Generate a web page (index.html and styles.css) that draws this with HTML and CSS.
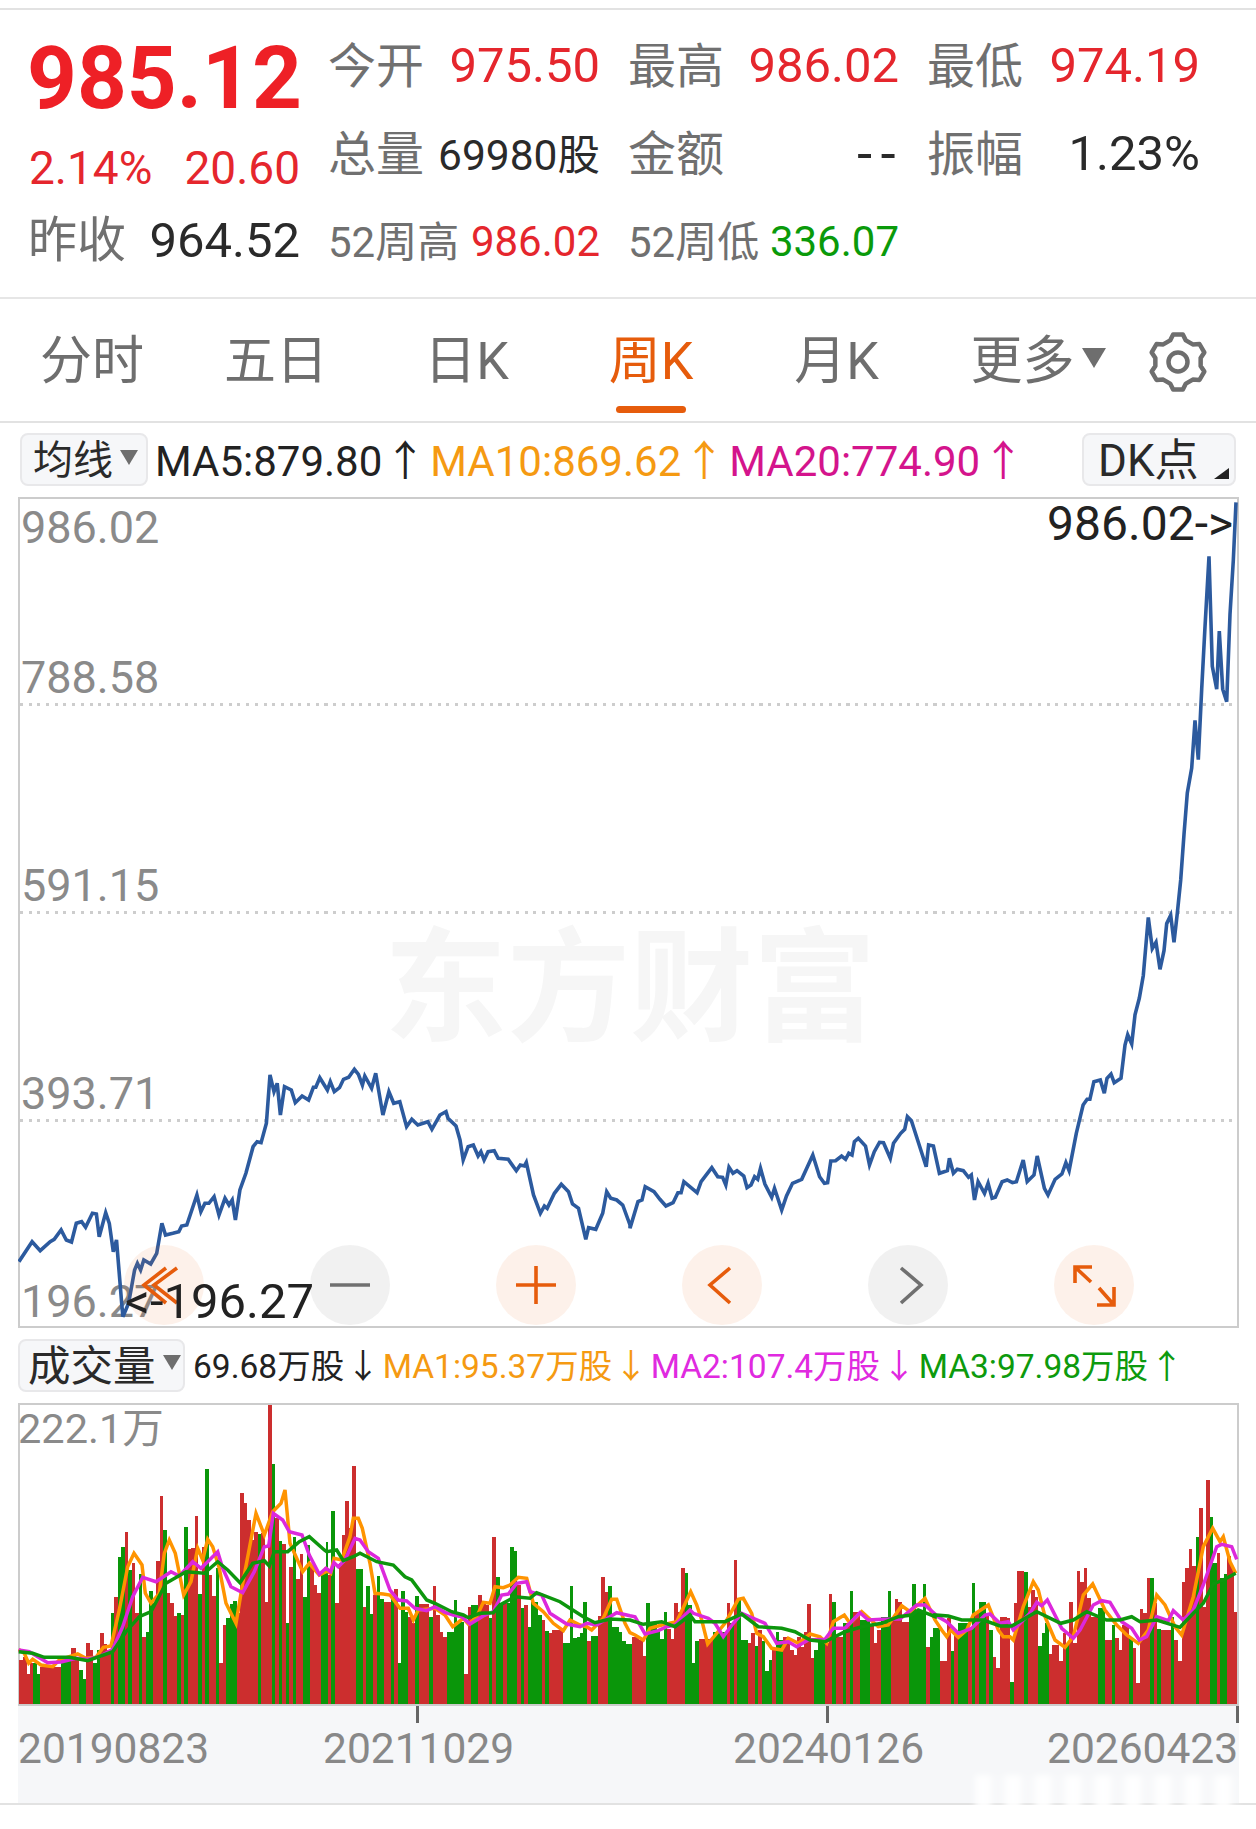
FILE: index.html
```html
<!DOCTYPE html>
<html lang="zh-CN">
<head>
  <meta charset="UTF-8" />
  <meta name="viewport" content="width=device-width, initial-scale=1.0"/>
  <title>周K</title>
  <link rel="stylesheet" href="styles.css">
</head>
<body>
  <!-- 报价区域 -->
  <div class="quote">
    <div class="quote-main">
      <div class="price">985.12</div>
      <div class="change"><span>2.14%</span><span>20.60</span></div>
      <div class="prev"><span class="label">昨收</span><span class="dark">964.52</span></div>
    </div>
    <div class="quote-grid">
      <div class="cell"><span class="label">今开</span><span class="up">975.50</span></div>
      <div class="cell"><span class="label">最高</span><span class="up">986.02</span></div>
      <div class="cell"><span class="label">最低</span><span class="up">974.19</span></div>
      <div class="cell"><span class="label">总量</span><span class="dark small">69980股</span></div>
      <div class="cell"><span class="label">金额</span><span class="dark dash">--</span></div>
      <div class="cell"><span class="label">振幅</span><span class="dark">1.23%</span></div>
      <div class="cell cell-52"><span class="label">52周高</span><span class="up">986.02</span></div>
      <div class="cell cell-52"><span class="label">52周低</span><span class="down">336.07</span></div>
    </div>
  </div>

  <!-- 周期切换 -->
  <div class="tabs">
    <div class="tab">分时</div>
    <div class="tab">五日</div>
    <div class="tab">日K</div>
    <div class="tab active">周K</div>
    <div class="tab">月K</div>
    <div class="tab">更多<i class="caret caret-more"></i></div>
    <svg class="gear" width="60" height="60" viewBox="0 0 60 60">
      <polygon points="22.13,8.4 25.14,2.43 34.86,2.43 37.87,8.4 44.78,12.38 51.45,12 56.31,20.42 52.65,26.01 52.65,33.99 56.31,39.58 51.45,48 44.78,47.62 37.87,51.6 34.86,57.57 25.14,57.57 22.13,51.6 15.22,47.62 8.55,48 3.69,39.58 7.35,33.99 7.35,26.01 3.69,20.42 8.55,12 15.22,12.38"/>
      <circle cx="30" cy="30" r="9.5"/>
    </svg>
  </div>

  <div class="charts">
    <!-- 均线 -->
    <div class="ma-row">
      <div class="pick pick-ma">均线<i class="caret"></i></div>
      <span class="ma ma-dark">MA5:879.80<b>↑</b></span>
      <span class="ma ma-orange">MA10:869.62<b>↑</b></span>
      <span class="ma ma-pink">MA20:774.90<b>↑</b></span>
      <div class="pick pick-dk">DK点<i class="corner"></i></div>
    </div>

    <!-- K线主图 -->
    <div class="chart-main">
      <div class="watermark">东方财富</div>
      <div class="scale-row first"><span>986.02</span><span>788.58</span></div>
      <div class="scale-row"><span>591.15</span></div>
      <div class="scale-row"><span>393.71</span></div>
      <div class="scale-row last"><span>196.27</span></div>
      <svg class="plot" id="pricePlot" viewBox="18 497 1221 831"></svg>
      <div class="controls">
        <div class="ctrl hot"><svg viewBox="0 0 80 80"><path d="M42 23 20 40 42 58M53 23 30 40 53 58"/></svg></div>
        <div class="ctrl"><svg viewBox="0 0 80 80"><path d="M20 40H60"/></svg></div>
        <div class="ctrl hot"><svg viewBox="0 0 80 80"><path d="M20 40H60M40 21V59"/></svg></div>
        <div class="ctrl hot"><svg viewBox="0 0 80 80"><path d="M48 23 28 40 48 58"/></svg></div>
        <div class="ctrl"><svg viewBox="0 0 80 80"><path d="M33 23 53 40 33 58"/></svg></div>
        <div class="ctrl hot"><svg viewBox="0 0 80 80"><path d="M21 38V22H38M21 22 37 37M43 60H60V42M60 60 45 43"/></svg></div>
      </div>
      <div class="mark mark-high">986.02-&gt;</div>
      <div class="mark mark-low">&lt;-196.27</div>
    </div>

    <!-- 成交量 -->
    <div class="ma-row vol-row">
      <div class="pick pick-vol">成交量<i class="caret"></i></div>
      <span class="ma ma-dark">69.68万股<b>↓</b></span>
      <span class="ma ma-orange">MA1:95.37万股<b>↓</b></span>
      <span class="ma ma-violet">MA2:107.4万股<b>↓</b></span>
      <span class="ma ma-green">MA3:97.98万股<b>↑</b></span>
    </div>

    <div class="chart-vol">
      <svg class="plot" id="volPlot" viewBox="18 1403 1221 303"></svg>
      <div class="vol-top">222.1万</div>
    </div>

    <div class="axis">
      <i class="tick tick-a"></i><i class="tick tick-b"></i><i class="tick tick-c"></i>
      <span>20190823</span><span>20211029</span><span>20240126</span><span>20260423</span>
    </div>
  </div>

  <div class="stamp"></div>

  <script src="chart.js"></script>
</body>
</html>
```

FILE: styles.css
```css
* {
  box-sizing: border-box;
  margin: 0;
  padding: 0;
}
body {
  font-family: Roboto, "Noto Sans CJK SC", sans-serif;
  background-color: #fff;
  color: #222;
  position: relative;
  padding-top: 8px;
}
/* 报价区域 */
.quote {
  display: flex;
  height: 291px;
  padding: 0 30px;
  border-top: 2px solid #e2e2e2;
  border-bottom: 2px solid #e6e6e6;
}
.quote-main {
  width: 270px;
  margin-right: 30px;
  padding-top: 24px;
}
.price {
  margin-left: -3px;
  font-size: 87px;
  line-height: 88px;
  font-weight: 700;
  color: #ee2026;
  white-space: nowrap;
}
.change {
  display: flex;
  justify-content: space-between;
  height: 93px;
  margin-left: -1px;
  font-size: 46px;
  line-height: 93px;
  color: #e5262d;
}
.prev {
  display: flex;
  justify-content: space-between;
  margin-top: -3px;
  font-size: 49px;
  line-height: 58px;
}
.prev .label {
  margin-bottom: 0;
  font-size: 49px;
}
.quote-grid {
  display: grid;
  grid-template-columns: 270px 269px 271px;
  grid-auto-rows: 88px;
  column-gap: 30px;
  padding-top: 11px;
}
.cell {
  display: flex;
  justify-content: space-between;
  align-items: center;
  font-size: 49px;
}
.label {
  margin-left: -2px;
  margin-bottom: 6px;
  color: #707070;
  font-size: 48px;
}
.up { color: #e5262d; }
.down { color: #0a9a0a; }
.dark { color: #2a2a2a; }
.small {
  margin-bottom: 3px;
  font-size: 42.5px;
}
.dash {
  margin-right: -4px;
  font-family: "DejaVu Sans", sans-serif;
  letter-spacing: 6px;
}
.cell-52 { font-size: 42px; }
.cell-52 .label { font-size: 42px; }
/* 周期切换 */
.tabs {
  display: grid;
  grid-template-columns: 184px 184px 197px 172px 199px 204px 1fr;
  height: 124px;
  padding-top: 27px;
  border-bottom: 2px solid #e2e2e2;
}
.tab {
  position: relative;
  display: flex;
  justify-content: center;
  align-items: center;
  height: 60px;
  font-size: 52px;
  color: #6e6e6e;
}
.tab.active {
  color: #e65c0c;
}
.tab.active::after {
  content: "";
  position: absolute;
  top: 80px;
  left: 51px;
  width: 70px;
  height: 7px;
  border-radius: 4px;
  background-color: #e65c0c;
}
.caret {
  display: inline-block;
  flex: none;
  width: 0;
  height: 0;
  margin-left: 7px;
  border-left: 9px solid transparent;
  border-right: 9px solid transparent;
  border-top: 15px solid #6e6e6e;
}
.caret-more {
  border-left-width: 12px;
  border-right-width: 12px;
  border-top-width: 20px;
  margin-left: 7px;
  margin-top: 4px;
}
.gear {
  margin: 6px 0 0 8px;
  fill: none;
  stroke: #6e6e6e;
  stroke-width: 4.5;
  stroke-linejoin: round;
}
/* 图表区域 */
.charts {
  padding: 0 17px 0 18px;
  border-bottom: 2px solid #e2e2e2;
}
.ma-row {
  display: flex;
  align-items: center;
  height: 74px;
  padding: 10px 0 11px;
  white-space: nowrap;
}
.pick {
  position: relative;
  display: flex;
  flex: none;
  align-items: center;
  height: 53px;
  padding-bottom: 5px;
  border: 2px solid #e8e8ea;
  border-radius: 8px;
  background-color: #f6f7f9;
  color: #2a2a2a;
  font-size: 40px;
}
.pick-ma {
  width: 128px;
  margin: 0 7px 0 2px;
  padding-left: 11px;
}
.pick-dk {
  width: 154px;
  margin-left: auto;
  margin-right: 3px;
  padding-left: 14px;
  font-size: 44px;
}
.corner {
  position: absolute;
  right: 5px;
  bottom: 5px;
  width: 0;
  height: 0;
  border-left: 15px solid transparent;
  border-bottom: 11px solid #222;
}
.pick-vol {
  width: 167px;
  margin-right: 8px;
  padding-left: 8px;
  font-size: 42.5px;
}
.ma {
  margin-right: 4px;
  margin-bottom: 5px;
  font-size: 42px;
}
.ma b {
  font-weight: 400;
  margin-left: 2px;
}
.vol-row {
  height: 75px;
}
.vol-row .ma {
  font-size: 33.5px;
  margin-right: 3px;
  margin-bottom: 4px;
}
.ma-dark { color: #222; }
.ma-orange { color: #f59a12; }
.ma-pink { color: #d4148c; }
.ma-violet { color: #e02ae0; }
.ma-green { color: #0d9a0d; }

.chart-main {
  position: relative;
  height: 831px;
  border: 2px solid #ccc;
}
.scale-row {
  display: flex;
  flex-direction: column;
  justify-content: flex-end;
  height: 208px;
  padding: 0 0 1px 1px;
  font-size: 45px;
  line-height: 54px;
  color: #8a8a8a;
  background: repeating-linear-gradient(90deg, #cdcdcd 0 3px, transparent 3px 8.7px) bottom / 100% 3px no-repeat;
}
.scale-row.first {
  height: 207px;
  padding-top: 2px;
  justify-content: space-between;
}
.scale-row.last {
  background: none;
  height: 204px;
  padding-bottom: 0;
}
.scale-row.last span {
  margin-bottom: -3px;
}
.watermark {
  position: absolute;
  top: 421px;
  left: 364px;
  font-size: 123px;
  line-height: 138px;
  font-weight: 700;
  white-space: nowrap;
  color: #f6f6f6;
}
.plot {
  position: absolute;
  top: -2px;
  left: -2px;
  width: 1221px;
}
.chart-main .plot { height: 831px; }
.chart-vol .plot { height: 303px; }
.controls {
  position: absolute;
  left: 104px;
  bottom: 1px;
  display: flex;
  gap: 106px;
}
.ctrl {
  width: 80px;
  height: 80px;
  border-radius: 50%;
  background-color: rgba(120, 120, 120, 0.1);
  stroke: #707070;
}
.ctrl.hot {
  background-color: rgba(240, 120, 50, 0.1);
  stroke: #e65c0c;
}
.ctrl svg {
  display: block;
  width: 80px;
  height: 80px;
  fill: none;
  stroke-width: 3.6;
}
.mark {
  position: absolute;
  font-size: 48px;
  line-height: 54px;
  color: #222;
}
.mark-high {
  top: -2px;
  right: 4px;
}
.mark-low {
  bottom: -3px;
  left: 105px;
  font-size: 49px;
}
.chart-vol {
  position: relative;
  height: 303px;
  border: 2px solid #ccc;
}
.vol-top {
  position: absolute;
  top: 2px;
  left: -2px;
  font-size: 41.5px;
  line-height: 44px;
  color: #8a8a8a;
}
.axis {
  position: relative;
  display: grid;
  grid-template-columns: 305px 410px 314px 1fr;
  height: 97px;
  padding-top: 18px;
  font-size: 42.5px;
  line-height: 50px;
  color: #888;
  background-color: #f6f7f9;
}
.tick {
  position: absolute;
  top: 0;
  width: 3px;
  height: 17px;
  background-color: #666;
}
.tick-a { left: 398px; }
.tick-b { left: 808px; }
.tick-c { left: 1218px; }
/* 右下角水印 */
.stamp {
  position: absolute;
  top: 1775px;
  left: 975px;
  width: 265px;
  height: 40px;
  background: repeating-linear-gradient(90deg, rgba(255, 255, 255, 0.9) 0 16px, rgba(255, 255, 255, 0.2) 16px 30px);
  filter: blur(3px);
}
```

FILE: chart.js
```js
(function() {
  const NS = 'http://www.w3.org/2000/svg';

  function add(svg, tag, attrs) {
    const el = document.createElementNS(NS, tag);
    Object.keys(attrs).forEach(k => el.setAttribute(k, attrs[k]));
    svg.appendChild(el);
  }

  // 把截图坐标换算成页面坐标
  function mapPts(list, ox, sx, oy, sy) {
    return list.map(p => (ox + p[0] / sx).toFixed(1) + ',' + (oy + p[1] / sy).toFixed(1));
  }

  const priceA = [[47,665],[80,605],[100,632],[125,605],[135,598],[152,570],[165,600],[178,606],[190,550],[203,545],[213,562],[230,520],[240,522],[247,590],[263,518],[272,550],[282,635],[290,600],[303,790],[306,830],[320,790],[335,690],[342,670],[350,690],[358,660],[375,672],[390,640],[403,550],[412,585],[430,580],[445,575],[452,558],[465,555],[490,465],[500,515],[510,490],[520,490],[533,470],[545,525],[560,475],[570,495],[578,480],[586,540],[597,450],[612,400],[630,320],[640,305],[650,308],[663,250],[672,105],[682,155],[690,130],[698,225],[708,140],[725,150],[735,188],[752,168],[768,180],[780,142],[786,142],[796,113],[815,150],[822,125],[832,155],[845,143],[855,118],[868,112],[882,88],[892,103],[902,135],[908,108],[925,145],[935,100],[953,225],[968,155],[980,190],[995,185],[1012,260],[1025,238],[1040,255],[1065,245],[1075,268],[1095,225],[1110,215],[1115,235],[1135,258],[1145,300],[1153,360],[1165,320],[1178,315],[1190,348],[1197,335],[1205,360],[1215,335],[1230,332],[1240,355],[1265,358],[1285,392],[1295,375],[1305,378],[1310,367],[1328,465],[1345,520],[1355,498],[1362,505],[1380,460],[1397,433],[1415,455],[1425,492],[1440,505],[1458,598],[1465,563],[1483,568],[1500,520],[1510,455],[1520,475],[1535,480],[1550,495],[1568,555]];
  const priceB = [[0,565],[20,485],[30,480],[38,440],[60,455],[75,478],[90,498],[108,488],[120,458],[128,458],[135,425],[155,445],[168,458],[178,425],[205,383],[220,410],[232,412],[240,435],[248,382],[258,400],[268,392],[285,408],[293,443],[303,435],[312,410],[320,418],[327,385],[338,432],[355,472],[362,445],[380,510],[392,468],[407,430],[430,418],[458,345],[475,410],[487,430],[495,428],[503,363],[515,362],[530,348],[540,358],[548,340],[556,345],[562,305],[572,295],[590,318],[600,375],[612,335],[625,307],[635,308],[652,355],[660,310],[678,280],[688,268],[695,230],[705,242],[742,380],[748,315],[760,318],[775,400],[795,392],[800,355],[810,400],[820,388],[835,392],[848,412],[855,405],[863,480],[872,425],[888,460],[897,430],[907,475],[915,472],[932,425],[945,420],[958,428],[968,425],[985,360],[995,425],[1012,405],[1020,348],[1038,445],[1047,465],[1065,418],[1082,402],[1092,368],[1100,392],[1118,280],[1135,195],[1145,178],[1152,178],[1162,125],[1178,120],[1188,160],[1195,115],[1205,102],[1213,128],[1230,115],[1240,15]];
  const priceC = [[683,1313],[695,1335],[705,1265],[718,1225],[730,1170],[745,1030],[757,1105],[768,1090],[780,1155],[792,1110],[800,1045],[812,1025],[822,1090],[832,1020],[842,940],[852,830],[862,730],[875,670],[885,555],[895,650],[905,480],[915,330],[927,160],[937,425],[950,480],[958,340],[968,480],[980,510],[990,300],[1000,170],[1008,30]];

  const pricePlot = document.getElementById('pricePlot');
  add(pricePlot, 'polyline', {
    points: mapPts(priceA, 0, 2.489, 1040, 3)
      .concat(mapPts(priceB, 630, 2.505, 1040, 3), mapPts(priceC, 900, 3, 490, 2.41)).join(' '),
    fill: 'none', stroke: '#2c5a9e', 'stroke-width': 3.6, 'stroke-linejoin': 'miter'
  });

  // 成交量：每段 "右边界 颜色 柱顶"，坐标取自 3 倍截图
  const bars = [
    [16, 8, '22r660 32r650 43r703 52r670 62g670 73g703 135r680 165g650 180r625 190r660 200g690 210g716 222r608 232r630 243g670 252g630 264r580 274r612 284r630 295g520 305r470 316g352 326g320 337r276 347g390 358r370 368r520 378g403 389r590 399g575 410g452 421r490 432r363 442r168 452g270 463r460 473r490 484r527 494g520 504r525 515g262 526r328 536r324 547r228 557g462 568r320 578g87 589r405 599r468 610g385 620r670 631r556 641g534 652g492 663g484 673r520 684r160 694r188 705r240 715r300 726r275 736g282 746r280 757r485 767r-105 777g73 788r235 798g302 809r312 819g548 830r380 840g290 851r416 861r343 872g470 883g315 893r380 904r436 914r460 930g400'],
    [320, 18, '24g305 34r405 45g214 56r488 66r370 76r284 87r183 97r264 107r78 128g386 139r500 149g438 160g522 170r465 181g408 191g478 212r485 223g472 233r448 244g668 255g453 265g515 276r532 286r548 297g468 328r492 338g530 349r437 360r525 370r575 380r590 402g575 412g480 433g545 444r703 454r500 475g495 486r466 497r490 507r495 517g535 528r290 539g410 549g495 560r490 570g490 581g322 591g333 602r435 612g505 623r495 634g560 655g485 665g525 676r540 686g572 697r580 728r570 749g608 759g438 770g595 780g590 790g580 801g487 812r602 833g588 844r528 854r410 864r455 875g437 896g560 906g575 917g602 930g612'],
    [625, 15, '22g612 43r590 53r600 64r647 74g490 95g545 106g570 117g598 127g517 138r568 148r598 158r490 169r515 179r384 190g400 200g495 211g668 222g602 264r598 306g575 316r490 327g550 337r360 348g475 369g600 379r608 390r578 400g618 411r570 421g602 432g692 442g660 453r630 463g575 474g600 495r590 506r630 516r645 527r590 537r620 547r575 557r492 568r655 579g630 600g600 611r610 621r462 632g487 653r590 663g550 674r550 684g452 705r515 736g540 746r555 757r610 767r570 789g530 799g453 810r530 820r478 831r485 851r545 862g510 872g433 893g510 904g433 914r622 925g590 930g565'],
    [930, 15, '30g565 40r664 52r664 62r535 72g633 83r580 114g550 125r570 135g430 146r520 167g485 177r520 188g570 198r652 209r685 230r530 240r535 251g726 262r490 283r393 293g395 303r500 314r450 324r470 335g618 345g580 356g550 367r642 387r615 398r662 408r580 418g610 429r487 440r610 450r393 461r427 471r383 482r475 503r530 524g505 545r600 555g555 566r595 577r630 598r555 608g595 618r625 629r728 639r507 650r520 660r413 671g415 681r490 692g568 723r570 733g530 744r600 755r662 765r427 776r385 786r327 797r378 807g290 818r203 828r500 839r120 850g230 860g370 871r340 881g413 892g403 902r348 912r380 920r515']
  ];

  const volPlot = document.getElementById('volPlot');
  bars.forEach(chunk => {
    let x = chunk[1];
    chunk[2].split(' ').forEach(seg => {
      const m = seg.match(/(\d+)([rg])(-?\d+)/);
      const end = +m[1];
      const top = 1440 + m[3] / 3;
      add(volPlot, 'rect', {
        x: chunk[0] + x / 3, y: top, width: (end - x) / 3, height: 1704 - top,
        fill: m[2] === 'r' ? '#cc2e2e' : '#0a960a', 'shape-rendering': 'crispEdges'
      });
      x = end;
    });
  });

  const OFFS = [16, 320, 625, 930];
  const lines = [
    ['#ff9400', [
      [[8,628],[25,640],[38,670],[50,658],[75,675],[110,680],[130,660],[160,650],[185,642],[210,655],[240,652],[262,622],[285,618],[310,510],[335,380],[354,340],[378,375],[388,460],[405,490],[430,460],[445,340],[460,300],[478,340],[503,465],[525,425],[545,325],[560,360],[575,298],[590,320],[610,385],[630,490],[660,550],[680,430],[720,220],[745,285],[770,215],[795,190],[807,150],[822,310],[860,395],[880,370],[910,405],[930,395]],
      [[18,390],[32,400],[42,355],[65,360],[90,290],[100,235],[115,235],[127,265],[150,370],[165,460],[190,462],[210,465],[240,505],[265,505],[280,540],[295,510],[345,505],[375,525],[398,560],[430,535],[445,552],[470,530],[490,487],[510,490],[525,440],[550,443],[570,435],[595,412],[620,415],[640,490],[670,515],[700,550],[730,572],[750,540],[780,555],[800,560],[815,570],[850,535],[875,478],[890,478],[915,550],[930,578]],
      [[15,578],[30,585],[55,600],[75,565],[110,555],[155,545],[197,455],[215,495],[230,540],[248,612],[300,550],[340,478],[355,475],[380,520],[395,580],[415,590],[440,625],[470,630],[490,595],[520,610],[555,582],[585,590],[605,610],[625,545],[658,525],[675,550],[710,515],[760,560],[790,555],[830,497],[855,515],[900,475],[930,540]],
      [[15,540],[35,570],[50,590],[62,570],[85,592],[110,570],[130,525],[175,495],[205,570],[220,590],[240,590],[250,600],[280,500],[310,425],[325,450],[345,530],[375,600],[405,622],[430,590],[460,465],[488,432],[525,510],[560,555],[590,585],[625,610],[655,570],[680,465],[705,495],[735,560],[755,585],[790,470],[820,320],[848,265],[870,305],[880,290],[900,365],[917,400]]
    ]],
    ['#dc28dc', [
      [[8,630],[40,635],[95,668],[135,666],[180,655],[215,658],[250,650],[290,628],[320,560],[350,470],[380,412],[420,425],[465,395],[490,408],[530,365],[555,385],[575,365],[605,335],[620,385],[645,440],[680,458],[715,395],[745,320],[758,318],[772,220],[800,240],[820,275],[858,285],[880,345],[910,403],[930,385]],
      [[18,385],[32,395],[42,368],[55,380],[75,360],[105,295],[120,300],[145,335],[175,355],[210,450],[235,480],[260,483],[285,505],[320,512],[345,500],[375,517],[400,525],[425,530],[450,552],[490,528],[520,515],[545,465],[565,462],[590,430],[620,425],[630,455],[665,465],[690,520],[740,552],[780,560],[800,550],[830,555],[870,530],[890,518],[930,527]],
      [[15,527],[30,530],[60,582],[100,572],[125,560],[150,555],[195,510],[205,520],[250,535],[270,550],[295,590],[325,550],[350,520],[420,550],[455,610],[490,605],[515,620],[550,600],[600,598],[625,565],[660,565],[705,518],[730,540],[770,538],[825,537],[875,495],[900,495],[930,522]],
      [[15,525],[50,545],[85,580],[125,565],[165,525],[180,522],[210,550],[235,545],[250,570],[300,520],[320,487],[335,497],[352,480],[395,565],[430,595],[450,570],[490,495],[515,482],[540,487],[575,545],[605,565],[628,600],[650,590],[680,530],[715,542],[730,512],[760,540],[790,510],[820,435],[860,320],[875,313],[905,320],[920,358]]
    ]],
    ['#0d960d', [
      [[8,635],[50,640],[85,652],[160,652],[215,662],[290,635],[330,575],[370,530],[405,515],[450,430],[510,395],[565,400],[605,365],[635,390],[672,428],[710,370],[745,362],[760,378],[775,335],[815,335],[850,305],[880,290],[925,330]],
      [[20,335],[50,330],[70,362],[100,350],[120,340],[170,365],[220,375],[255,410],[275,420],[320,480],[345,490],[395,515],[430,525],[445,533],[480,520],[520,518],[540,495],[585,470],[630,475],[650,458],[720,485],[750,505],[790,530],[825,548],[870,537],[930,540]],
      [[15,540],[55,553],[110,545],[150,560],[195,525],[210,545],[260,545],[300,545],[350,522],[400,560],[470,565],[510,575],[555,600],[600,605],[660,575],[710,560],[770,550],[820,530],[860,525],[880,510],[930,530]],
      [[15,525],[55,528],[95,540],[160,540],[210,558],[245,558],[320,515],[392,550],[430,540],[470,515],[530,540],[570,540],[605,530],[630,545],[680,540],[750,562],[790,520],[820,490],[850,432],[880,420],[917,400]]
    ]]
  ];

  lines.forEach(line => {
    let pts = [];
    line[1].forEach((part, i) => {
      pts = pts.concat(mapPts(part, OFFS[i], 3, 1440, 3));
    });
    add(volPlot, 'polyline', {
      points: pts.join(' '), fill: 'none', stroke: line[0], 'stroke-width': 3.5
    });
  });
})();
```
